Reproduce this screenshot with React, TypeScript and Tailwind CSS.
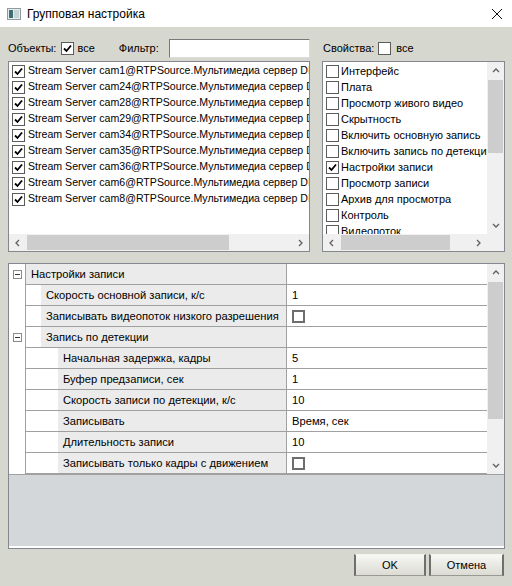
import React from "react";

const font = { fontFamily: '"Liberation Sans", Arial, sans-serif' };

function Check({ checked }: { checked: boolean }) {
  return (
    <div className="w-[13px] h-[13px] shrink-0 bg-white border border-[#5c5c5c] flex items-center justify-center">
      {checked && (
        <svg width="9" height="9" viewBox="0 0 9 9">
          <path d="M1 4.5 L3.5 7 L8 1.5" fill="none" stroke="#000" strokeWidth="1.8" />
        </svg>
      )}
    </div>
  );
}

function Chevron({ dir }: { dir: "up" | "down" | "left" | "right" }) {
  const d =
    dir === "up"
      ? "M1 5 L4 2 L7 5"
      : dir === "down"
      ? "M1 2 L4 5 L7 2"
      : dir === "left"
      ? "M5 1 L2 4 L5 7"
      : "M2 1 L5 4 L2 7";
  return (
    <svg width="8" height="8" viewBox="0 0 8 8">
      <path d={d} fill="none" stroke="#606060" strokeWidth="1.3" />
    </svg>
  );
}

function HScroll({ thumbLeft, thumbWidth }: { thumbLeft: number; thumbWidth: number }) {
  return (
    <div className="h-[17px] bg-[#f0f0f0] flex items-center relative shrink-0">
      <div className="w-[17px] h-full flex items-center justify-center">
        <Chevron dir="left" />
      </div>
      <div className="flex-1 h-full relative">
        <div className="absolute top-[1px] bottom-[1px] bg-[#cdcdcd]" style={{ left: thumbLeft, width: thumbWidth }} />
      </div>
      <div className="w-[17px] h-full flex items-center justify-center">
        <Chevron dir="right" />
      </div>
    </div>
  );
}

function VScroll({ thumbTop, thumbHeight }: { thumbTop: number; thumbHeight: number }) {
  return (
    <div className="w-[17px] bg-[#f0f0f0] flex flex-col shrink-0 h-full">
      <div className="h-[17px] flex items-center justify-center">
        <Chevron dir="up" />
      </div>
      <div className="flex-1 relative">
        <div className="absolute left-[1px] right-[1px] bg-[#cdcdcd]" style={{ top: thumbTop, height: thumbHeight }} />
      </div>
      <div className="h-[17px] flex items-center justify-center">
        <Chevron dir="down" />
      </div>
    </div>
  );
}

const cams = ["cam1", "cam24", "cam28", "cam29", "cam34", "cam35", "cam36", "cam6", "cam8"];
const props: [string, boolean][] = [
  ["Интерфейс", false],
  ["Плата", false],
  ["Просмотр живого видео", false],
  ["Скрытность", false],
  ["Включить основную запись", false],
  ["Включить запись по детекции", false],
  ["Настройки записи", true],
  ["Просмотр записи", false],
  ["Архив для просмотра", false],
  ["Контроль", false],
  ["Видеопоток", false],
];

type Row = { label: string; level: number; value?: string; check?: boolean; expand?: boolean };
const rows: Row[] = [
  { label: "Настройки записи", level: 0, expand: true },
  { label: "Скорость основной записи, к/с", level: 1, value: "1" },
  { label: "Записывать видеопоток низкого разрешения", level: 1, check: true },
  { label: "Запись по детекции", level: 1, expand: true },
  { label: "Начальная задержка, кадры", level: 2, value: "5" },
  { label: "Буфер предзаписи, сек", level: 2, value: "1" },
  { label: "Скорость записи по детекции, к/с", level: 2, value: "10" },
  { label: "Записывать", level: 2, value: "Время, сек" },
  { label: "Длительность записи", level: 2, value: "10" },
  { label: "Записывать только кадры с движением", level: 2, check: true },
];

function Minus() {
  return (
    <div className="w-[9px] h-[9px] border border-[#8a8a8a] bg-white flex items-center justify-center">
      <div className="w-[5px] h-[1px] bg-[#333]" />
    </div>
  );
}

function GridRow({ r }: { r: Row }) {
  const indent = r.level === 0 ? 0 : r.level === 1 ? 15 : 32;
  return (
    <div className="flex h-[21px]">
      <div className="w-[17px] shrink-0 bg-white border-r border-[#a0a0a0] flex items-center justify-center">
        {r.expand && <Minus />}
      </div>
      <div className="flex-1 flex border-b border-[#a0a0a0] min-w-0">
        <div className="bg-white shrink-0" style={{ width: indent }} />
        <div className="flex-1 bg-[#ebebeb] flex items-center overflow-hidden whitespace-nowrap pl-[5px] text-[11.2px] text-black min-w-0">
          {r.label}
        </div>
        <div className="w-[201px] shrink-0 bg-white border-l border-[#a0a0a0] flex items-center pl-[5px] text-[11.2px] text-black">
          {r.check ? <div className="w-[13px] h-[13px] border-2 border-[#6e6e6e] bg-white" /> : r.value}
        </div>
      </div>
    </div>
  );
}

export default function App() {
  return (
    <div className="w-[512px] h-[586px] bg-[#d6d7cf] flex flex-col overflow-hidden text-black" style={font}>
      {/* title bar */}
      <div className="h-[27px] bg-white flex items-center shrink-0">
        <div className="ml-[7px] mt-[1px]">
          <svg width="14" height="12" viewBox="0 0 14 12">
            <rect x="0.5" y="0.5" width="13" height="11" fill="#e8ecee" stroke="#8d9aa0" />
            <rect x="2" y="2" width="4" height="8" fill="#3d6f74" />
            <rect x="7" y="2" width="5" height="8" fill="#c8d3d6" />
          </svg>
        </div>
        <div className="ml-[6px] text-[12px]">Групповая настройка</div>
        <div className="ml-auto mr-[9px]">
          <svg width="12" height="12" viewBox="0 0 12 12">
            <path d="M1 1 L11 11 M11 1 L1 11" stroke="#111" strokeWidth="1" />
          </svg>
        </div>
      </div>

      <div className="flex flex-col pl-[8px] pr-[7px]">
        {/* top label row */}
        <div className="mt-[11px] h-[20px] flex items-center text-[11px]">
          <div className="w-[302px] flex items-center shrink-0">
            <span>Объекты:</span>
            <div className="ml-[5px]">
              <Check checked />
            </div>
            <span className="ml-[3px]">все</span>
            <span className="ml-[24px]">Фильтр:</span>
            <div className="ml-auto w-[141px] h-[19px] bg-white border border-[#7a7a7a] border-b-[#dcdcdc] border-r-[#dcdcdc]" />
          </div>
          <div className="ml-[13px] flex items-center">
            <span>Свойства:</span>
            <div className="ml-[4px]">
              <Check checked={false} />
            </div>
            <span className="ml-[5px]">все</span>
          </div>
        </div>

        {/* lists */}
        <div className="mt-[3px] flex h-[191px]">
          <div className="w-[302px] shrink-0 bg-white border border-[#828790] flex flex-col">
            <div className="flex-1 pt-[1px] pl-[3px] overflow-hidden">
              {cams.map((c) => (
                <div key={c} className="h-[16px] flex items-center whitespace-nowrap text-[10.6px]">
                  <Check checked />
                  <span className="ml-[3px]">Stream Server {c}@RTPSource.Мультимедиа сервер DIGITAL</span>
                </div>
              ))}
            </div>
            <HScroll thumbLeft={1} thumbWidth={202} />
          </div>
          <div className="ml-[12px] w-[183px] shrink-0 bg-white border border-[#828790] flex flex-col">
            <div className="flex-1 flex min-h-0">
              <div className="flex-1 pt-[1px] pl-[3px] overflow-hidden">
                {props.map(([p, c]) => (
                  <div key={p} className="h-[16px] flex items-center whitespace-nowrap text-[11px]">
                    <Check checked={c} />
                    <span className="ml-[2px]">{p}</span>
                  </div>
                ))}
              </div>
              <VScroll thumbTop={1} thumbHeight={73} />
            </div>
            <div className="flex">
              <div className="flex-1">
                <HScroll thumbLeft={1} thumbWidth={109} />
              </div>
              <div className="w-[17px] h-[17px] bg-[#f0f0f0]" />
            </div>
          </div>
        </div>

        {/* property grid */}
        <div className="mt-[11px] h-[286px] border border-[#828790] flex flex-col">
          <div className="h-[210px] flex shrink-0 bg-white">
            <div className="flex-1 flex flex-col min-w-0">
              {rows.map((r) => (
                <GridRow key={r.label} r={r} />
              ))}
            </div>
            <VScroll thumbTop={1} thumbHeight={137} />
          </div>
          <div className="flex-1 bg-[#d4d7da] border-t border-[#a0a0a0] border-b-2 border-b-white" />
        </div>

        {/* buttons */}
        <div className="mt-[5px] flex justify-end pr-[1px] text-[11px]">
          <button className="w-[72px] h-[22px] border-x-2 border-x-[#6f6f6b] border-t border-t-[#f4f4f0] border-b border-b-[#9a9a94] bg-gradient-to-b from-[#f7f7f4] to-[#dcdcd4] flex items-center justify-center">
            OK
          </button>
          <button className="ml-[3px] w-[75px] h-[22px] border-x-2 border-x-[#6f6f6b] border-t border-t-[#f4f4f0] border-b border-b-[#9a9a94] bg-gradient-to-b from-[#f7f7f4] to-[#dcdcd4] flex items-center justify-center">
            Отмена
          </button>
        </div>
      </div>
    </div>
  );
}
